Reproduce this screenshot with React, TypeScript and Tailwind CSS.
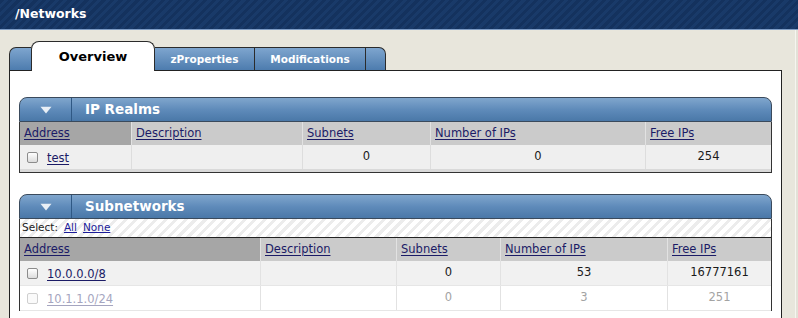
import React from "react";

const realmCols = "grid-cols-[111px_171px_128px_215px_126px]";
const subnetCols = "grid-cols-[240px_136px_104px_167px_104px]";

const Triangle = () => (
  <svg width="12" height="8" viewBox="0 0 12 8">
    <path d="M0.5 0.8 L11.5 0.8 L6 7.5 Z" fill="#f4f7fb" fillOpacity="0.92" />
  </svg>
);

const Checkbox = ({ faded }: { faded?: boolean }) => (
  <span
    className={`inline-block w-[11px] h-[11px] rounded-[2px] border ${
      faded
        ? "border-[#cfcfcf] bg-[#fafafa]"
        : "border-[#8c8c8c] bg-gradient-to-b from-white to-[#dcdcdc]"
    }`}
  />
);

const SectionHeader = ({ title }: { title: string }) => (
  <div className="flex h-[25px] rounded-t-[8px] border border-[#3a4a5c] bg-gradient-to-b from-[#80a6cd] via-[#5f8bba] to-[#4a78a8]">
    <div className="w-[52px] flex items-center justify-center border-r border-[#2f5884] pt-[1px]">
      <Triangle />
    </div>
    <div className="pl-[13px] flex items-center text-white font-bold text-[13.5px] leading-none">
      {title}
    </div>
  </div>
);

const HeadCell = ({ label, sorted, first }: { label: string; sorted?: boolean; first?: boolean }) => (
  <div
    className={`h-[23px] px-[4px] flex items-center ${sorted ? "bg-[#a6a6a6]" : "bg-[#cbcbcb]"} ${
      first ? "" : "border-l border-[#e2e2e2]"
    }`}
  >
    <a className="text-[11.5px] text-[#1b1b66] underline underline-offset-2">{label}</a>
  </div>
);

const App = () => {
  const realmHeads = ["Address", "Description", "Subnets", "Number of IPs", "Free IPs"];
  const subnets = [
    { addr: "10.0.0.0/8", subnets: "0", ips: "53", free: "16777161", faded: false },
    { addr: "10.1.1.0/24", subnets: "0", ips: "3", free: "251", faded: true },
  ];

  return (
    <div className="w-[798px] h-[318px] overflow-hidden bg-[#e8e6dc] font-['DejaVu_Sans',Verdana,sans-serif] flex flex-col">
      {/* Title bar */}
      <div className="h-[30px] shrink-0 flex items-center pl-[15px] border-b border-[#7f9dc6] bg-[repeating-linear-gradient(135deg,#14325e_0px,#14325e_3px,#193a69_3px,#193a69_6px)]">
        <span className="text-white font-bold text-[12.5px]">/Networks</span>
      </div>

      <div className="flex flex-1 min-h-0">
        <div className="w-[9px] shrink-0" />

        <div className="w-[773px] shrink-0 flex flex-col pt-[11px]">
          {/* Tabs */}
          <div className="flex items-end h-[29px] relative z-10">
            <div className="w-[22px] h-[23px] rounded-tl-[7px] border-l border-t border-[#2b2b2b] bg-gradient-to-b from-[#7ea5ce] to-[#4d7cae]" />
            <div className="w-[124px] h-[30px] -mb-px rounded-t-[8px] border border-b-0 border-[#2b2b2b] bg-white flex justify-center pt-[7px]">
              <span className="font-bold text-[13px] leading-[16px] text-black">Overview</span>
            </div>
            <div className="w-[100px] h-[23px] border-t border-r border-[#2b2b2b] bg-gradient-to-b from-[#7ea5ce] to-[#4d7cae] flex items-center justify-center pt-[2px]">
              <span className="text-white font-bold text-[10.5px]">zProperties</span>
            </div>
            <div className="w-[111px] h-[23px] border-t border-r border-[#2b2b2b] bg-gradient-to-b from-[#7ea5ce] to-[#4d7cae] flex items-center justify-center pt-[2px]">
              <span className="text-white font-bold text-[10.5px]">Modifications</span>
            </div>
            <div className="w-[20px] h-[23px] rounded-tr-[7px] border-t border-r border-[#2b2b2b] bg-gradient-to-b from-[#7ea5ce] to-[#4d7cae]" />
          </div>

          {/* Panel */}
          <div className="flex-1 bg-white border border-b-0 border-[#222] px-[9px] pt-[26px]">
            {/* IP Realms */}
            <SectionHeader title="IP Realms" />
            <div className="border-x border-b border-[#333]">
              <div className={`grid ${realmCols}`}>
                {realmHeads.map((h, i) => (
                  <HeadCell key={h} label={h} sorted={i === 0} first={i === 0} />
                ))}
              </div>
              <div className={`grid ${realmCols} bg-[#efefef] text-[11.5px] text-[#1a1a1a]`}>
                <div className="h-[24px] flex items-center pl-[7px] gap-[9px]">
                  <Checkbox />
                  <a className="text-[#1b1b66] underline underline-offset-2 pt-[3px]">test</a>
                </div>
                <div className="h-[24px] border-l border-[#dddddd]" />
                <div className="h-[24px] border-l border-[#dddddd] flex items-center justify-center">0</div>
                <div className="h-[24px] border-l border-[#dddddd] flex items-center justify-center">0</div>
                <div className="h-[24px] border-l border-[#dddddd] flex items-center justify-center">254</div>
              </div>
              <div className="h-[3px] bg-[#d9d9d9]" />
            </div>

            {/* Subnetworks */}
            <div className="mt-[21px]">
              <SectionHeader title="Subnetworks" />
              <div className="border-x border-[#333]">
                <div className="h-[19px] flex items-center gap-[6px] pl-[2px] text-[10.5px] border-b border-[#222] bg-[repeating-linear-gradient(135deg,#ffffff_0px,#ffffff_4px,#ececec_4px,#ececec_7px)]">
                  <span className="text-[#222]">Select:</span>
                  <a className="text-[#1b1b99] underline">All</a>
                  <a className="text-[#1b1b99] underline">None</a>
                </div>
                <div className={`grid ${subnetCols}`}>
                  {realmHeads.map((h, i) => (
                    <HeadCell key={h} label={h} sorted={i === 0} first={i === 0} />
                  ))}
                </div>
                {subnets.map((s) => (
                  <div
                    key={s.addr}
                    className={`grid ${subnetCols} text-[11.5px] border-b border-[#e6e6e6] ${
                      s.faded ? "bg-white text-[#a3a3a3]" : "bg-[#f1f1f1] text-[#1a1a1a]"
                    }`}
                  >
                    <div className="h-[24px] flex items-center pl-[7px] gap-[9px]">
                      <Checkbox faded={s.faded} />
                      <a
                        className={`underline underline-offset-2 pt-[3px] ${
                          s.faded ? "text-[#a5a5c0]" : "text-[#1b1b66]"
                        }`}
                      >
                        {s.addr}
                      </a>
                    </div>
                    <div className="h-[24px] border-l border-[#e2e2e2]" />
                    <div className="h-[24px] border-l border-[#e2e2e2] flex items-center justify-center">{s.subnets}</div>
                    <div className="h-[24px] border-l border-[#e2e2e2] flex items-center justify-center">{s.ips}</div>
                    <div className="h-[24px] border-l border-[#e2e2e2] flex items-center justify-center">{s.free}</div>
                  </div>
                ))}
              </div>
            </div>
          </div>
        </div>

        <div className="w-[13px] shrink-0" />
        <div className="w-px shrink-0 bg-[#f6f5f0]" />
        <div className="flex-1 bg-[#e3e1d7]" />
      </div>
    </div>
  );
};

export default App;
